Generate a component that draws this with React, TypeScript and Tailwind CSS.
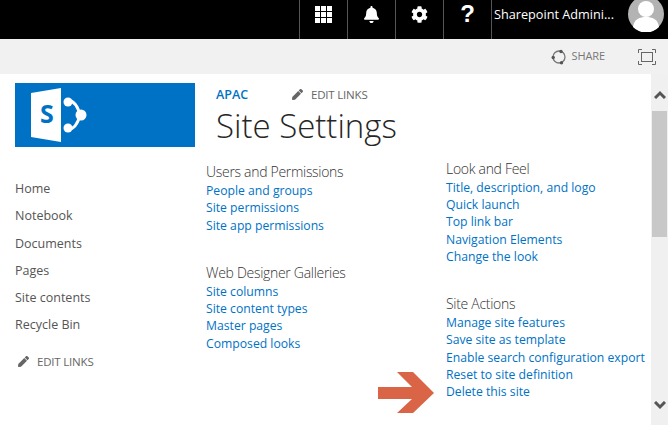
import { FaBell, FaCog, FaPen } from "react-icons/fa";

const sections = {
  left: [
    {
      title: "Users and Permissions",
      links: ["People and groups", "Site permissions", "Site app permissions"],
    },
    {
      title: "Web Designer Galleries",
      links: ["Site columns", "Site content types", "Master pages", "Composed looks"],
    },
  ],
  right: [
    {
      title: "Look and Feel",
      links: ["Title, description, and logo", "Quick launch", "Top link bar", "Navigation Elements", "Change the look"],
    },
    {
      title: "Site Actions",
      links: [
        "Manage site features",
        "Save site as template",
        "Enable search configuration export",
        "Reset to site definition",
        "Delete this site",
      ],
    },
  ],
};

const navItems = ["Home", "Notebook", "Documents", "Pages", "Site contents", "Recycle Bin"];

function Section({ title, links }: { title: string; links: string[] }) {
  return (
    <div>
      <div className="text-[14px] leading-[21px] font-light tracking-[-0.3px] text-[#333333]">{title}</div>
      <ul>
        {links.map((link) => (
          <li key={link} className="text-[12.2px] leading-[17.25px] text-[#0072c6]">
            {link}
          </li>
        ))}
      </ul>
    </div>
  );
}

function TopCell({ children }: { children: React.ReactNode }) {
  return <div className="flex h-full w-12 items-center justify-center border-l border-[#555555] pb-[11px]">{children}</div>;
}

function EditLinks() {
  return (
    <div className="flex items-center gap-[8px] text-[11.5px] tracking-[-0.2px] text-[#666666]">
      <FaPen size={11} color="#666666" />
      <span>EDIT LINKS</span>
    </div>
  );
}

export default function App() {
  return (
    <div className="relative h-[425px] w-[668px] overflow-hidden bg-white font-['Open_Sans',sans-serif]">
      <header className="flex h-[39px] items-center justify-end bg-black text-white">
        <TopCell>
          <div className="grid grid-cols-3 gap-[1px]">
            {Array.from({ length: 9 }).map((_, i) => (
              <div key={i} className="h-[5px] w-[5px] bg-white" />
            ))}
          </div>
        </TopCell>
        <TopCell>
          <FaBell size={17} />
        </TopCell>
        <TopCell>
          <FaCog size={17} />
        </TopCell>
        <TopCell>
          <span className="font-['Liberation_Sans',sans-serif] text-[24px] leading-[28px] font-bold">?</span>
        </TopCell>
        <div className="flex h-full w-[177px] items-center border-l border-[#555555] pl-[2px]">
          <span className="mb-[9px] w-[134px] text-[12.7px] whitespace-nowrap">Sharepoint Admini...</span>
          <svg width="36" height="36" viewBox="0 0 36 36" className="mb-[11px] shrink-0">
            <circle cx="18" cy="18" r="18" fill="#b3b3b3" />
            <circle cx="18" cy="13" r="8" fill="white" />
            <path d="M5 31c1-8 7-10 13-10s12 2 13 10a18 18 0 0 1-26 0z" fill="white" />
          </svg>
        </div>
      </header>

      <div className="flex h-[35px] items-center justify-end bg-[#f1f1f1] text-[#777777]">
        <svg width="16" height="16" viewBox="0 0 16 16" className="mr-[5px]" fill="none">
          <circle cx="8" cy="8" r="6" stroke="#777777" strokeWidth="1.3" />
          <circle cx="10" cy="2.5" r="1.7" fill="#555555" />
          <circle cx="2.2" cy="8.5" r="1.7" fill="#555555" />
          <circle cx="10.5" cy="13.8" r="1.7" fill="#555555" />
        </svg>
        <span className="mr-[33px] text-[11px] tracking-[-0.1px]">SHARE</span>
        <svg width="18" height="16" viewBox="0 0 18 16" className="mr-[12px]" fill="none" stroke="#666666">
          <rect x="3.5" y="3.5" width="11" height="9" />
          <path d="M.5 4V.5H4M14 .5h3.5V4M17.5 12v3.5H14M4 15.5H.5V12" />
        </svg>
      </div>

      <div className="flex h-[351px]">
        <aside className="w-[206px] shrink-0 pt-[9px] pl-[15px]">
          <div className="flex h-[64px] w-[180px] items-center bg-[#0072c6] pl-[16px]">
            <svg width="56" height="54" viewBox="0 0 56 54">
              <path d="M0 5 30 0v54L0 49z" fill="white" />
              <circle cx="37" cy="14" r="4.5" fill="white" />
              <circle cx="37" cy="40" r="4.5" fill="white" />
              <circle cx="50" cy="27" r="5.5" fill="white" />
              <path d="M37 12C43 13 47 19 49 27 47 35 43 41 37 42" fill="none" stroke="white" strokeWidth="3" />
              <text x="9" y="35" fontSize="25" fontWeight="700" fill="#0072c6">
                S
              </text>
            </svg>
          </div>
          <nav className="mt-[28px] text-[12.5px] leading-[27.3px] text-[#555555]">
            {navItems.map((item) => (
              <div key={item}>{item}</div>
            ))}
          </nav>
          <div className="mt-[14px] ml-[3px]">
            <EditLinks />
          </div>
        </aside>

        <main className="min-w-0 flex-1">
          <div className="pl-[10px]">
            <div className="flex items-center pt-[12px]">
              <span className="w-[76px] text-[12.5px] leading-[17px] font-semibold text-[#0072c6]">APAC</span>
              <EditLinks />
            </div>
            <h1 className="mt-[1px] text-[33px] leading-[44px] font-light text-[#262626]">Site Settings</h1>
          </div>
          <div className="flex">
            <div className="flex w-[240px] shrink-0 flex-col gap-[28px] pt-[12.8px]">
              {sections.left.map((s) => (
                <Section key={s.title} {...s} />
              ))}
            </div>
            <div className="flex flex-col gap-[28px] pt-[9.5px]">
              {sections.right.map((s) => (
                <Section key={s.title} {...s} />
              ))}
            </div>
          </div>
        </main>

        <div className="flex w-[17px] shrink-0 flex-col items-center bg-[#f0f0f0]">
          <svg width="12" height="9" viewBox="0 0 12 9" className="mt-[16px]" fill="none" stroke="#555555" strokeWidth="3">
            <path d="M1 8l5-5 5 5" />
          </svg>
          <div className="mt-[12px] h-[126px] w-[15px] bg-[#c8c8c8]" />
          <svg width="12" height="9" viewBox="0 0 12 9" className="mt-auto mb-[15px]" fill="none" stroke="#555555" strokeWidth="3">
            <path d="M1 1l5 5 5-5" />
          </svg>
        </div>
      </div>

      <svg width="56" height="41" viewBox="0 0 56 41" className="absolute top-[372px] left-[378px]">
        <path d="M0 15H34L19 0H35L56 21 35 41H19L34 27H0z" fill="#da6446" />
      </svg>
    </div>
  );
}
